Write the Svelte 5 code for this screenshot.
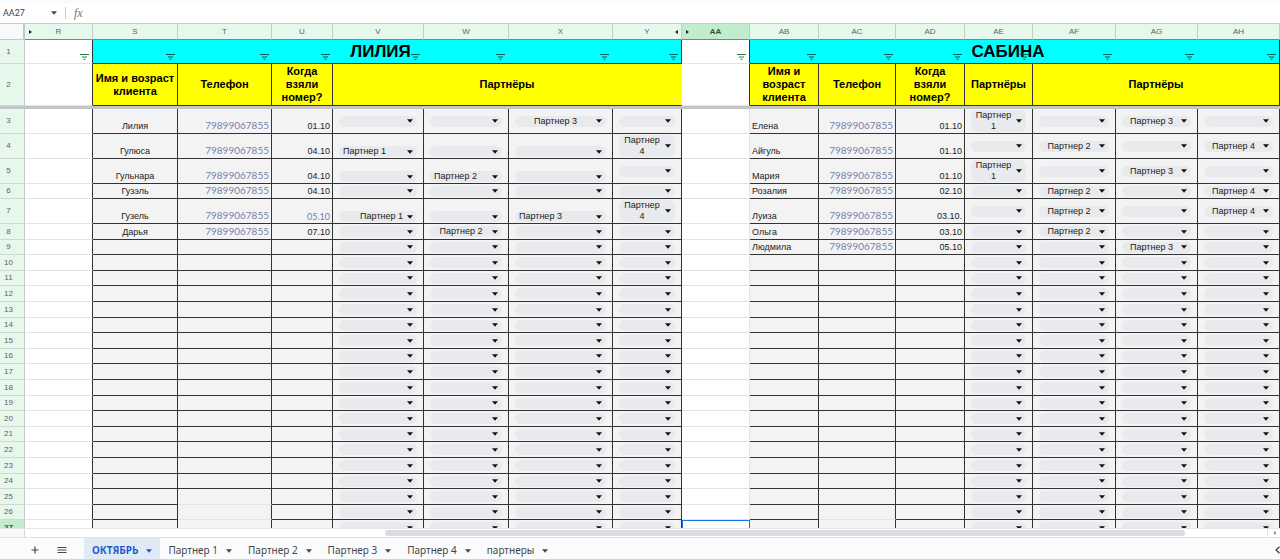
<script>
    const leftCols = [
        { id: "S", width: 85 },
        { id: "T", width: 94 },
        { id: "U", width: 61 },
        { id: "V", width: 91 },
        { id: "W", width: 85 },
        { id: "X", width: 104 },
        { id: "Y", width: 69 },
    ];
    const rightCols = [
        { id: "AB", width: 69 },
        { id: "AC", width: 77 },
        { id: "AD", width: 69 },
        { id: "AE", width: 68 },
        { id: "AF", width: 83 },
        { id: "AG", width: 82 },
        { id: "AH", width: 82 },
    ];
    const cols = [
        { id: "R", width: 68 },
        ...leftCols,
        { id: "AA", width: 68 },
        ...rightCols,
    ];

    const phone = "79899067855";
    const options = ["", "Партнер 1", "Партнер 2", "Партнер 3", "Партнер 4"];

    // partners: the option number in each of the four partner columns
    const left = {
        3: { name: "Лилия", date: "01.10", partners: [0, 0, 3, 0] },
        4: { name: "Гулюса", date: "04.10", partners: [1, 0, 0, 4] },
        5: { name: "Гульнара", date: "04.10", partners: [0, 2, 0, 0] },
        6: { name: "Гузэль", date: "04.10", partners: [0, 0, 0, 0] },
        7: { name: "Гузель", date: "05.10", partners: [1, 0, 3, 4], muted: true },
        8: { name: "Дарья", date: "07.10", partners: [0, 2, 0, 0] },
    };
    const right = {
        3: { name: "Елена", date: "01.10", partners: [1, 0, 3, 0] },
        4: { name: "Айгуль", date: "01.10", partners: [0, 2, 0, 4] },
        5: { name: "Мария", date: "01.10", partners: [1, 0, 3, 0] },
        6: { name: "Розалия", date: "02.10", partners: [0, 2, 0, 4] },
        7: { name: "Луиза", date: "03.10.", partners: [0, 2, 0, 4] },
        8: { name: "Ольга", date: "03.10", partners: [0, 2, 0, 0] },
        9: { name: "Людмила", date: "05.10", partners: [0, 0, 3, 0] },
    };
    const aligns = { V4: "start", V7: "end", W5: "start", X7: "start" };
    const tall = [3, 4, 5, 7];
    const empty = { name: "", date: "", partners: [0, 0, 0, 0] };
    const rows = Array.from({ length: 25 }, (_, i) => i + 3);

    const tabs = ["ОКТЯБРЬ", "Партнер 1", "Партнер 2", "Партнер 3", "Партнер 4", "партнеры"];
    let active = "ОКТЯБРЬ";

    const tracks = (list) => list.map((c) => `${c.width}fr`).join(" ");
    const wraps = (col, value) => value > 0 && (col === "Y" || col === "AE");
    const isBottom = (col, n) => [4, 5, 7].includes(n) && ["V", "W", "X"].includes(col);
</script>

{#snippet caret()}
    <svg class="caret" viewBox="0 0 6 4" aria-hidden="true">
        <path d="M0 0.3h6L3 3.7z" fill="currentColor" />
    </svg>
{/snippet}

{#snippet filter(id)}
    <button class="filter" aria-label="Фильтр {id}">
        <svg viewBox="0 0 9 6" aria-hidden="true">
            <path d="M0 .5h9M2 3h5M3.5 5.3h2" stroke="currentColor" fill="none" />
        </svg>
    </button>
{/snippet}

{#snippet band(title, list)}
    <th class="band" colspan="7">
        {title}
        <div class="filters" style="grid-template-columns: {tracks(list)}">
            {#each list as col}
                {@render filter(col.id)}
            {/each}
        </div>
    </th>
{/snippet}

{#snippet block(n, data, list, side)}
    <td class="cell {side}">{data.name}</td>
    <td
        class="cell phone"
        class:faint={(side === "left" && n > 24) || (side === "right" && n > 25)}
    >
        {data.name ? phone : ""}
    </td>
    <td class="cell date" class:muted={data.muted}>{data.date}</td>
    {#each data.partners as value, i}
        {@const col = list[i + 3].id}
        <td class="cell pick" class:bottom={isBottom(col, n)}>
            <div class="chip {aligns[col + n] ?? ''}" class:wrap={wraps(col, value)}>
                <select aria-label="{col}{n}" value={options[value]}>
                    {#each options as option}
                        <option value={option}>{option}</option>
                    {/each}
                </select>
                {@render caret()}
            </div>
        </td>
    {/each}
{/snippet}

<div class="page">
    <div class="formula-bar">
        <input class="name-box" aria-label="Ячейка" value="AA27" />
        {@render caret()}
        <span class="divider"></span>
        <label class="fx" for="formula">fx</label>
        <input id="formula" class="formula" />
    </div>

    <div class="sheet">
        <table>
            <colgroup>
                <col style="width: 25px" />
                {#each cols as col}
                    <col style="width: {col.width}px" />
                {/each}
            </colgroup>
            <thead>
                <tr class="letters">
                    <td class="corner"></td>
                    {#each cols as col}
                        <th scope="col" class:current={col.id === "AA"}>
                            {col.id}
                            {#if col.id === "R" || col.id === "AA"}
                                <i class="hidden-mark before"></i>
                            {:else if col.id === "Y"}
                                <i class="hidden-mark after"></i>
                            {/if}
                        </th>
                    {/each}
                </tr>
                <tr class="titles">
                    <th class="num" scope="row">1</th>
                    <td class="blank edge">{@render filter("R")}</td>
                    {@render band("ЛИЛИЯ", leftCols)}
                    <td class="blank edge">{@render filter("AA")}</td>
                    {@render band("САБИНА", rightCols)}
                </tr>
                <tr class="heads">
                    <th class="num" scope="row">2</th>
                    <td class="blank edge"></td>
                    <th class="head">Имя и возраст клиента</th>
                    <th class="head">Телефон</th>
                    <th class="head">Когда взяли номер?</th>
                    <th class="head open" colspan="4">Партнёры</th>
                    <td class="blank edge"></td>
                    <th class="head">Имя и возраст клиента</th>
                    <th class="head">Телефон</th>
                    <th class="head">Когда взяли номер?</th>
                    <th class="head">Партнёры</th>
                    <th class="head" colspan="3">Партнёры</th>
                </tr>
                <tr class="freeze"><td colspan="17"></td></tr>
            </thead>
            <tbody>
                {#each rows as n}
                    <tr class:tall={tall.includes(n)}>
                        <th class="num" class:current={n === 27} scope="row">{n}</th>
                        <td class="blank edge"></td>
                        {@render block(n, left[n] ?? empty, leftCols, "left")}
                        <td class="blank" class:selected={n === 27}></td>
                        {@render block(n, right[n] ?? empty, rightCols, "right")}
                    </tr>
                {/each}
            </tbody>
        </table>
    </div>

    <div class="scroll">
        <div class="scroll-corner"></div>
        <div class="track"><div class="thumb"></div></div>
        <button class="scroll-button" aria-label="Влево">
            <svg viewBox="0 0 3 4" aria-hidden="true"><path d="M2.5 0v4L.5 2z" fill="currentColor" /></svg>
        </button>
    </div>

    <nav class="tabs">
        <button class="tool" aria-label="Добавить лист">
            <svg viewBox="0 0 10 10" aria-hidden="true">
                <path d="M5 1.5v7M1.5 5h7" stroke="currentColor" stroke-width="1.2" />
            </svg>
        </button>
        <button class="tool" aria-label="Все листы">
            <svg viewBox="0 0 10 10" aria-hidden="true">
                <path d="M0.5 2.5h9M0.5 5h9M0.5 7.5h9" stroke="currentColor" stroke-width="1.2" />
            </svg>
        </button>
        <div class="tab-list">
            {#each tabs as tab}
                <button class="tab" class:active={tab === active} on:click={() => (active = tab)}>
                    {tab}
                    {@render caret()}
                </button>
            {/each}
        </div>
        <button class="collapse" aria-label="Показать панель">
            <svg viewBox="0 0 5 8" aria-hidden="true">
                <path d="M4.5 .8L1 4l3.5 3.2" stroke="currentColor" stroke-width="1.3" fill="none" />
            </svg>
        </button>
    </nav>
</div>

<style>
    :global(body) {
        background: #fff;
    }

    .page {
        display: flex;
        flex-direction: column;
        height: 100vh;
        overflow: hidden;
        font-family: "Liberation Sans", Arial, sans-serif;
        font-size: 9px;
        line-height: 11px;
        color: #222;
    }

    button,
    input,
    select {
        margin: 0;
        padding: 0;
        border: 0;
        background: none;
        font: inherit;
        color: inherit;
    }

    .caret {
        width: 6px;
        height: 4px;
        flex: none;
    }

    .formula-bar {
        display: flex;
        align-items: center;
        height: 20px;
        flex: none;
        padding-left: 3px;
        border-top: 3px solid #f8fafd;
        border-bottom: 1px solid #c9cbce;
        color: #444;
    }

    .name-box {
        width: 48px;
        font-family: Roboto, sans-serif;
    }

    .divider {
        width: 1px;
        height: 12px;
        margin: 0 8px;
        background: #c9cbce;
    }

    .fx {
        font-family: "Liberation Serif", serif;
        font-size: 12px;
        font-style: italic;
        color: #70757a;
    }

    .formula {
        flex: 1;
        margin-left: 8px;
    }

    .sheet {
        flex: 1;
        min-height: 0;
        overflow: hidden;
        border-bottom: 1px solid #e4e5e7;
    }

    table {
        width: 100%;
        table-layout: fixed;
        border-collapse: separate;
        border-spacing: 0;
    }

    th,
    td {
        box-sizing: border-box;
        padding: 0;
        border-right: 1px solid #333;
        border-bottom: 1px solid #333;
    }

    .letters {
        height: 16px;
    }

    .letters th {
        position: relative;
        background: #e6f7ec;
        border-right-color: #c4ccc7;
        border-bottom-color: #4fa06c;
        font-size: 8px;
        font-weight: normal;
        color: #5f6368;
    }

    .letters th.current {
        background: #c1eccd;
        font-weight: bold;
        color: #37503f;
    }

    .corner {
        background: #f8f9fa;
        border-right: 2px solid #c4c6c9;
        border-bottom-color: #c4c6c9;
    }

    .hidden-mark {
        position: absolute;
        top: 6px;
        border: 2px solid transparent;
    }

    .before {
        left: 4px;
        border-left: 3px solid #222;
        border-right: 0;
    }

    .after {
        right: 3px;
        border-right: 3px solid #222;
        border-left: 0;
    }

    .num {
        padding-right: 7px;
        background: #e6f7ec;
        border-right-color: #c4ccc7;
        border-bottom-color: #d0d8d3;
        font-size: 8px;
        line-height: 10px;
        font-weight: normal;
        color: #5f6368;
    }

    .num.current {
        background: #c1eccd;
        font-weight: bold;
        color: #37503f;
    }

    .blank {
        background: #fff;
        border-right-color: #e2e3e3;
        border-bottom-color: #e2e3e3;
    }

    .blank.edge {
        border-right-color: #333;
    }

    .selected {
        border: 1px solid #1a73e8;
        border-bottom: 0;
    }

    .titles {
        height: 24px;
    }

    .titles .blank {
        vertical-align: bottom;
    }

    .band {
        position: relative;
        padding-right: 13px;
        background: #0ff;
        font-size: 17px;
        line-height: 20px;
        color: #000;
    }

    .filters {
        position: absolute;
        inset: 0;
        display: grid;
        align-items: end;
    }

    .filter {
        display: block;
        margin: 0 3px 3px auto;
        color: #1d7a45;
    }

    .filters .filter {
        color: #0b5a50;
    }

    .filter svg {
        display: block;
        width: 9px;
        height: 6px;
    }

    .heads {
        height: 42px;
    }

    .head {
        padding: 0 2px;
        background: #ff0;
        font-size: 11px;
        line-height: 13px;
        color: #000;
    }

    .open {
        border-right-color: #ff0;
    }

    .freeze td {
        height: 3px;
        border: 0;
        background: #c4c5c8;
    }

    tbody tr {
        height: 16px;
    }

    /* rows alternate between 15 and 16 pixels */
    tbody tr:nth-child(5n + 2),
    tbody tr:nth-child(5n + 4) {
        height: 15px;
    }

    tbody tr.tall {
        height: 25px;
    }

    .cell {
        background: #f3f3f3;
        vertical-align: bottom;
        padding: 0 2px 1px;
    }

    .left {
        text-align: center;
    }

    .phone {
        font-family: Lato, sans-serif;
        font-size: 10px;
        text-align: right;
        color: #7482ae;
        padding-bottom: 2px;
    }

    .faint {
        border-bottom-color: #e2e3e3;
    }

    .date {
        text-align: right;
    }

    .muted {
        font-family: Lato, sans-serif;
        color: #7482ae;
    }

    .pick {
        padding: 0 6px;
        vertical-align: middle;
    }

    .pick.bottom {
        padding-bottom: 1px;
        vertical-align: bottom;
    }

    .chip {
        position: relative;
        border-radius: 6px;
        background: #e8eaed;
    }

    .chip select {
        display: block;
        appearance: none;
        width: 100%;
        height: 11px;
        padding: 0 14px 0 4px;
        text-align: center;
        text-align-last: center;
        outline: none;
    }

    .chip.start select {
        text-align: left;
        text-align-last: left;
    }

    .chip.end select {
        text-align: right;
        text-align-last: right;
    }

    .chip.wrap select {
        height: 22px;
        white-space: normal;
    }

    .chip .caret {
        position: absolute;
        top: calc(50% - 2px);
        right: 4px;
        color: #111;
        pointer-events: none;
    }

    .scroll {
        display: flex;
        height: 8px;
        flex: none;
        border-bottom: 1px solid #dfe1e4;
    }

    .scroll-corner {
        width: 24px;
        background: #f8f9fa;
        border-right: 1px solid #d5d7da;
    }

    .track {
        flex: 1;
        padding-top: 1px;
    }

    .thumb {
        width: 64.4%;
        height: 6px;
        margin-left: 29%;
        border-radius: 3px;
        background: #dadce0;
    }

    .scroll-button {
        display: flex;
        align-items: center;
        justify-content: center;
        width: 13px;
        border-left: 1px solid #e4e5e7;
        color: #5f6368;
    }

    .scroll-button svg {
        width: 3px;
        height: 4px;
    }

    .tabs {
        display: flex;
        align-items: stretch;
        height: 21px;
        flex: none;
        padding-left: 30px;
        background: #f9fbfd;
        color: #444746;
    }

    .tool {
        display: flex;
        align-items: center;
        padding-top: 3px;
        margin-right: 17px;
    }

    .tool svg {
        width: 10px;
        height: 10px;
    }

    .tab-list {
        display: flex;
        flex: 1;
    }

    .tab {
        display: flex;
        align-items: center;
        gap: 8px;
        padding: 4px 8px 0;
        font-family: "Noto Sans", sans-serif;
        font-size: 10px;
        line-height: 13px;
    }

    .tab.active {
        background: #e1e9f7;
        font-weight: bold;
        color: #1b5bd0;
    }

    .collapse {
        display: flex;
        align-items: center;
        padding-top: 3px;
    }

    .collapse svg {
        width: 5px;
        height: 8px;
    }
</style>
